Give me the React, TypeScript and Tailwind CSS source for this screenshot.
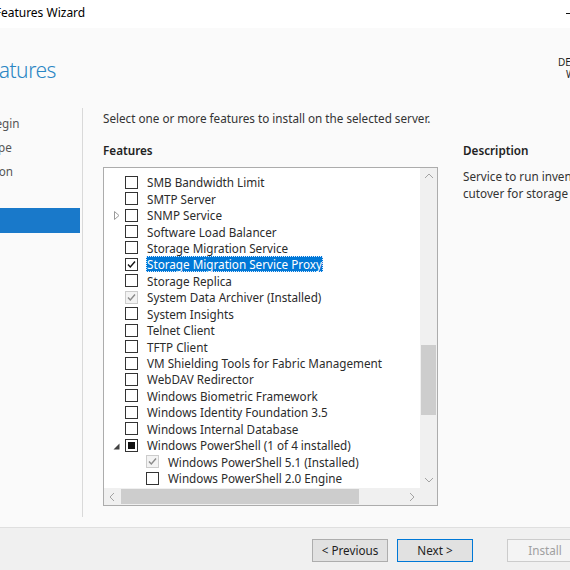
import React from 'react';

type Row = {
  label: string;
  state?: 'checked' | 'disabledChecked' | 'indeterminate';
  expander?: 'collapsed' | 'expanded';
  selected?: boolean;
  level?: number;
};

const rows: Row[] = [
  { label: 'SMB Bandwidth Limit' },
  { label: 'SMTP Server' },
  { label: 'SNMP Service', expander: 'collapsed' },
  { label: 'Software Load Balancer' },
  { label: 'Storage Migration Service' },
  { label: 'Storage Migration Service Proxy', state: 'checked', selected: true },
  { label: 'Storage Replica' },
  { label: 'System Data Archiver (Installed)', state: 'disabledChecked' },
  { label: 'System Insights' },
  { label: 'Telnet Client' },
  { label: 'TFTP Client' },
  { label: 'VM Shielding Tools for Fabric Management' },
  { label: 'WebDAV Redirector' },
  { label: 'Windows Biometric Framework' },
  { label: 'Windows Identity Foundation 3.5' },
  { label: 'Windows Internal Database' },
  { label: 'Windows PowerShell (1 of 4 installed)', state: 'indeterminate', expander: 'expanded' },
  { label: 'Windows PowerShell 5.1 (Installed)', state: 'disabledChecked', level: 1 },
  { label: 'Windows PowerShell 2.0 Engine', level: 1 },
];

function Checkbox({ state }: { state?: Row['state'] }) {
  const disabled = state === 'disabledChecked';
  return (
    <div
      className={
        'w-[13px] h-[13px] shrink-0 border flex items-center justify-center ' +
        (disabled ? 'border-[#cccccc] bg-[#f3f3f3]' : 'border-[#333333] bg-white')
      }
    >
      {(state === 'checked' || state === 'disabledChecked') && (
        <svg width="11" height="11" viewBox="0 0 11 11">
          <polyline
            points="2,5.5 4.3,8 9,2.5"
            fill="none"
            stroke={disabled ? '#8a8a8a' : '#111111'}
            strokeWidth="1.4"
          />
        </svg>
      )}
      {state === 'indeterminate' && <div className="w-[7px] h-[7px] bg-[#111111]" />}
    </div>
  );
}

function Expander({ kind }: { kind?: Row['expander'] }) {
  if (kind === 'collapsed')
    return (
      <svg width="6" height="9" viewBox="0 0 6 9" className="ml-[10px]">
        <polygon points="0.5,0.5 5,4.5 0.5,8.5" fill="none" stroke="#9a9a9a" strokeWidth="1" />
      </svg>
    );
  if (kind === 'expanded')
    return (
      <svg width="7" height="7" viewBox="0 0 7 7" className="ml-[9px] mt-[2px]">
        <polygon points="6.5,0.5 6.5,6.5 0.5,6.5" fill="#404040" />
      </svg>
    );
  return null;
}

function Chevron({ dir }: { dir: 'up' | 'down' | 'left' | 'right' }) {
  const pts =
    dir === 'up'
      ? '1,6 5,2 9,6'
      : dir === 'down'
      ? '1,3 5,7 9,3'
      : dir === 'left'
      ? '6,1 2,5 6,9'
      : '3,1 7,5 3,9';
  return (
    <svg width="10" height="10" viewBox="0 0 10 10">
      <polyline points={pts} fill="none" stroke="#a3a3a3" strokeWidth="1" />
    </svg>
  );
}

export default function App() {
  return (
    <div className="w-[570px] h-[570px] overflow-hidden bg-[#fafafa] flex flex-col font-['Segoe_UI','Noto_Sans','Liberation_Sans',sans-serif] text-[11.7px] text-[#1e1e1e] whitespace-nowrap">
      {/* title bar */}
      <div className="h-[28px] shrink-0 bg-white flex items-center justify-between">
        <div className="ml-[-89px] text-[12px] text-black leading-[16px] mt-[-2px]">Add Roles and Features Wizard</div>
        <div className="w-[10px] h-[1px] bg-[#111111] mr-[-6px] mt-[-2px]" />
      </div>

      {/* header */}
      <div className="h-[76px] shrink-0 flex">
        <div className="flex-1 min-w-0">
          <div className="ml-[-77px] mt-[26px] text-[21px] tracking-[-0.5px] font-light leading-[32px] text-[#2a86c4]">Select features</div>
        </div>
        <div className="w-[12px] shrink-0 pt-[28px] text-[10px] leading-[12px] text-[#1e1e1e]">
          <div>DESTINATION SERVER</div>
          <div className="ml-[8px]">WIN-SRV2019</div>
        </div>
      </div>

      {/* body */}
      <div className="flex h-[423px] shrink-0">
        {/* nav */}
        <div className="w-[83px] shrink-0 pt-[4px] pb-[10px]">
          <div className="h-full border-r border-[#d9d9d9] pt-[4px] overflow-hidden">
            <div className="flex flex-col text-[#555555]">
              <div className="h-[24px] flex items-center ml-[-75px]">Before You Begin</div>
              <div className="h-[24px] flex items-center ml-[-79px]">Installation Type</div>
              <div className="h-[24px] flex items-center ml-[-75px]">Server Selection</div>
              <div className="h-[24px] flex items-center ml-[-75px]">Server Roles</div>
              <div className="h-[25px] flex items-center bg-[#1979ca] text-white mr-[2px]">
                <span className="ml-[-75px]">Features</span>
              </div>
            </div>
          </div>
        </div>

        {/* main */}
        <div className="flex-1 min-w-0 pl-[20px] pt-[6px] flex flex-col">
          <div className="h-[16px] leading-[16px] text-[#333333]">Select one or more features to install on the selected server.</div>
          <div className="flex mt-[16px] gap-[25px]">
            <div className="w-[335px] shrink-0 flex flex-col">
              <div className="h-[17px] leading-[17px] font-semibold text-[#222222]">Features</div>
              <div className="mt-[8px] w-[335px] h-[339px] border border-[#acacac] bg-white flex flex-col">
                <div className="flex h-[320px]">
                  <div className="flex-1 min-w-0 overflow-hidden pt-[6px]">
                    {rows.map((r) => (
                      <div key={r.label} className="h-[16.44px] flex items-center text-[#2b2b2b]">
                        {r.level ? <div className="w-[21px] shrink-0" /> : null}
                        <div className="w-[21px] shrink-0 flex items-center">
                          <Expander kind={r.expander} />
                        </div>
                        <Checkbox state={r.state} />
                        <span
                          className={
                            'ml-[8px] px-[1px] h-[16px] leading-[16px] ' +
                            (r.selected ? 'bg-[#0078d7] text-white outline-1 outline-dotted outline-[#e0ecff] outline-offset-[-1px]' : '')
                          }
                        >
                          {r.label}
                        </span>
                      </div>
                    ))}
                  </div>
                  <div className="w-[17px] shrink-0 bg-[#f0f0f0] flex flex-col items-center">
                    <div className="h-[17px] flex items-center justify-center">
                      <Chevron dir="up" />
                    </div>
                    <div className="flex-1 w-full flex flex-col">
                      <div className="h-[160px]" />
                      <div className="h-[70px] mx-[1px] bg-[#cdcdcd]" />
                    </div>
                    <div className="h-[17px] flex items-center justify-center">
                      <Chevron dir="down" />
                    </div>
                  </div>
                </div>
                <div className="flex h-[17px]">
                  <div className="flex-1 bg-[#f0f0f0] flex items-center">
                    <div className="w-[17px] h-full flex items-center justify-center">
                      <Chevron dir="left" />
                    </div>
                    <div className="w-[238px] h-[15px] bg-[#cdcdcd]" />
                    <div className="flex-1" />
                    <div className="w-[17px] h-full flex items-center justify-center">
                      <Chevron dir="right" />
                    </div>
                  </div>
                  <div className="w-[17px] bg-[#f0f0f0]" />
                </div>
              </div>
            </div>
            <div className="shrink-0">
              <div className="h-[17px] leading-[17px] font-semibold text-[#222222]">Description</div>
              <div className="mt-[9px] leading-[17px] text-[#333333]">
                <div>Service to run inventory and transfer data,</div>
                <div>cutover for storage migration.</div>
              </div>
            </div>
          </div>
        </div>
      </div>

      {/* bottom */}
      <div className="flex-1 border-t border-[#dfdfdf] bg-[#f0f0f0] pt-[11px] flex">
        <div className="ml-[312px] flex gap-[9px]">
          <div className="w-[76px] h-[23px] border border-[#adadad] bg-[#e1e1e1] flex items-center justify-center text-[#1e1e1e]">
            &lt; Previous
          </div>
          <div className="w-[76px] h-[23px] border border-[#0078d7] bg-[#e1e1e1] flex items-center justify-center text-[#1e1e1e]">
            Next &gt;
          </div>
          <div className="ml-[25px] w-[76px] h-[23px] shrink-0 border border-[#cccccc] bg-[#f4f4f4] flex items-center justify-center text-[#a0a0a0]">
            Install
          </div>
        </div>
      </div>
    </div>
  );
}
